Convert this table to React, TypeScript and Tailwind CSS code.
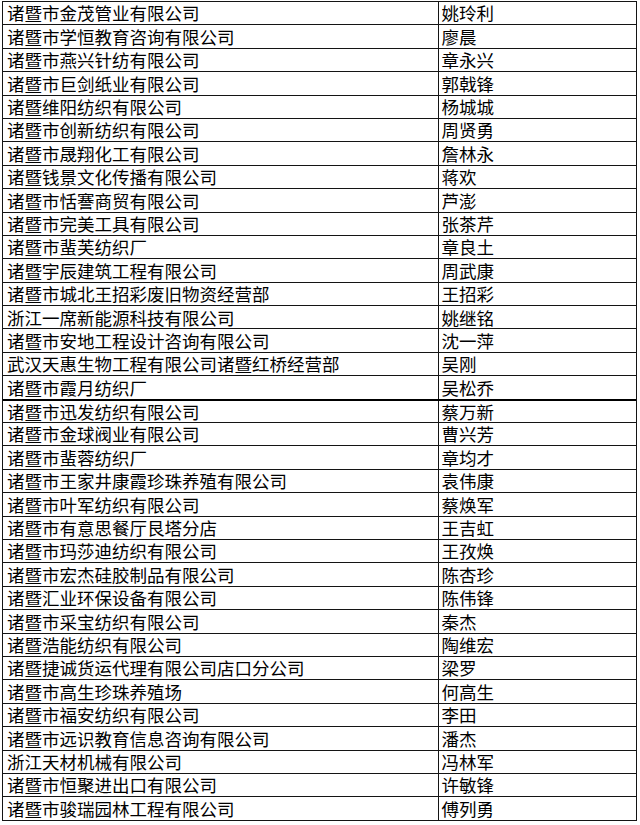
import React from "react";

const rows: [string, string][] = [
  ["诸暨市金茂管业有限公司", "姚玲利"],
  ["诸暨市学恒教育咨询有限公司", "廖晨"],
  ["诸暨市燕兴针纺有限公司", "章永兴"],
  ["诸暨市巨剑纸业有限公司", "郭戟锋"],
  ["诸暨维阳纺织有限公司", "杨城城"],
  ["诸暨市创新纺织有限公司", "周贤勇"],
  ["诸暨市晟翔化工有限公司", "詹林永"],
  ["诸暨钱景文化传播有限公司", "蒋欢"],
  ["诸暨市恬謇商贸有限公司", "芦澎"],
  ["诸暨市完美工具有限公司", "张茶芹"],
  ["诸暨市蜚芙纺织厂", "章良土"],
  ["诸暨宇辰建筑工程有限公司", "周武康"],
  ["诸暨市城北王招彩废旧物资经营部", "王招彩"],
  ["浙江一席新能源科技有限公司", "姚继铭"],
  ["诸暨市安地工程设计咨询有限公司", "沈一萍"],
  ["武汉天惠生物工程有限公司诸暨红桥经营部", "吴刚"],
  ["诸暨市霞月纺织厂", "吴松乔"],
  ["诸暨市迅发纺织有限公司", "蔡万新"],
  ["诸暨市金球阀业有限公司", "曹兴芳"],
  ["诸暨市蜚蓉纺织厂", "章均才"],
  ["诸暨市王家井康霞珍珠养殖有限公司", "袁伟康"],
  ["诸暨市叶军纺织有限公司", "蔡焕军"],
  ["诸暨市有意思餐厅艮塔分店", "王吉虹"],
  ["诸暨市玛莎迪纺织有限公司", "王孜焕"],
  ["诸暨市宏杰硅胶制品有限公司", "陈杏珍"],
  ["诸暨汇业环保设备有限公司", "陈伟锋"],
  ["诸暨市采宝纺织有限公司", "秦杰"],
  ["诸暨浩能纺织有限公司", "陶维宏"],
  ["诸暨捷诚货运代理有限公司店口分公司", "梁罗"],
  ["诸暨市高生珍珠养殖场", "何高生"],
  ["诸暨市福安纺织有限公司", "李田"],
  ["诸暨市远识教育信息咨询有限公司", "潘杰"],
  ["浙江天材机械有限公司", "冯林军"],
  ["诸暨市恒聚进出口有限公司", "许敏锋"],
  ["诸暨市骏瑞园林工程有限公司", "傅列勇"],
];

export default function App() {
  return (
    <div
      className="w-[640px] h-[825px] bg-white pt-[1px] pl-[1.5px] text-black"
      style={{ fontFamily: '"Noto Sans CJK SC", "Noto Sans", sans-serif' }}
    >
      <div className="w-[635px] border border-[#141414] flex flex-col">
        {rows.map(([company, person], i) => (
          <div
            key={i}
            className={
              i === 0
                ? "flex h-[22.4px]"
                : i === 17
                ? "flex h-[23.4px] border-t-2 border-[#000]"
                : "flex h-[23.4px] border-t border-[#141414]"
            }
          >
            <div className="w-[436px] border-r border-[#141414] flex items-center pl-[4.5px] text-[17.5px] leading-none whitespace-nowrap">
              {company}
            </div>
            <div className="flex-1 flex items-center pl-[3px] text-[17.5px] leading-none whitespace-nowrap">
              {person}
            </div>
          </div>
        ))}
      </div>
    </div>
  );
}
